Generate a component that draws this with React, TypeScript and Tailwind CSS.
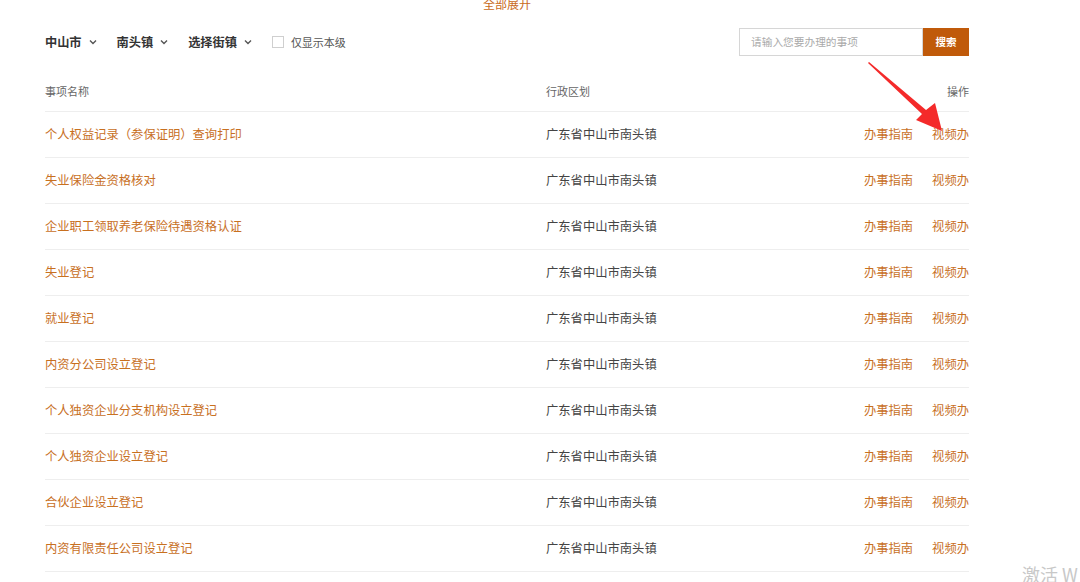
import React from "react";

const rows = [
  "个人权益记录（参保证明）查询打印",
  "失业保险金资格核对",
  "企业职工领取养老保险待遇资格认证",
  "失业登记",
  "就业登记",
  "内资分公司设立登记",
  "个人独资企业分支机构设立登记",
  "个人独资企业设立登记",
  "合伙企业设立登记",
  "内资有限责任公司设立登记",
];

function Chevron() {
  return (
    <svg width="8" height="6" viewBox="0 0 8 6" className="mt-[1px]">
      <polyline points="1,1.5 4,4.5 7,1.5" fill="none" stroke="#555" strokeWidth="1.4" />
    </svg>
  );
}

function Filter({ label }: { label: string }) {
  return (
    <div className="mr-[20px] flex items-center gap-[7px]">
      <span className="text-[12.2px] font-bold text-[#333]">{label}</span>
      <Chevron />
    </div>
  );
}

export default function App() {
  return (
    <div
      className="relative w-[1080px] h-[582px] overflow-hidden bg-white"
      style={{ fontFamily: '"Noto Sans CJK SC", "Noto Sans", sans-serif' }}
    >
      <div className="ml-[45px] w-[924px]">
        <div className="-mt-[2px] h-[12px] text-center text-[12px] leading-[12px] text-[#c86a1c]">全部展开</div>
        <div className="mt-[18px] flex h-[28px] items-center">
          <Filter label="中山市" />
          <Filter label="南头镇" />
          <Filter label="选择街镇" />
          <div className="h-[12px] w-[12px] border border-[#cfcfcf] bg-white" />
          <span className="ml-[7px] text-[11px] text-[#555]">仅显示本级</span>
          <div className="ml-auto flex h-[28px]">
            <div className="flex w-[184px] items-center border border-[#d6d6d6] pl-[11px] text-[10.7px] text-[#aaa]">
              请输入您要办理的事项
            </div>
            <div className="flex w-[46px] items-center justify-center bg-[#c05a0a] text-[10.5px] font-bold text-white">
              搜索
            </div>
          </div>
        </div>
        <div className="mt-[17px] grid h-[39px] grid-cols-[501px_1fr_auto] items-center border-b border-[#eeeeee] pb-[1px] text-[11px] text-[#666]">
          <span>事项名称</span>
          <span>行政区划</span>
          <span>操作</span>
        </div>
        {rows.map((r) => (
          <div
            key={r}
            className="grid h-[46px] grid-cols-[501px_1fr_auto] items-center border-b border-[#eeeeee] text-[12.3px]"
          >
            <span className="text-[#c8701f]">{r}</span>
            <span className="text-[#444]">广东省中山市南头镇</span>
            <div className="flex gap-[19px] text-[#c8701f]">
              <span>办事指南</span>
              <span>视频办</span>
            </div>
          </div>
        ))}
      </div>
      <svg className="pointer-events-none absolute left-0 top-0" width="1080" height="582">
        <polygon
          points="869,62 926,110 935,103 942,131 916,120 922,114 868,63"
          fill="#f42a2a"
        />
      </svg>
      <div className="absolute left-[1022px] top-[563px] text-[18px] leading-[22px] text-[#c8c8c8]">激活 W</div>
    </div>
  );
}
